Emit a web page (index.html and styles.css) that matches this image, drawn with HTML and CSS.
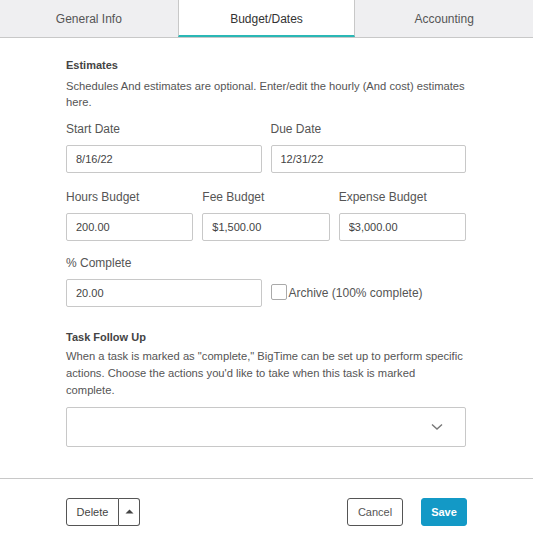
FILE: index.html
```html
<!DOCTYPE html>
<html lang="en">
<head>
    <meta charset="UTF-8">
    <title>Task - Budget/Dates</title>
    <meta name="viewport" content="width=device-width, initial-scale=1.0">
    <link rel="stylesheet" href="styles.css">
</head>
<body>
    <div class="tabs">
        <div class="tab">General Info</div>
        <div class="tab active">Budget/Dates</div>
        <div class="tab">Accounting</div>
    </div>

    <div class="content">
        <h2 class="section-title">Estimates</h2>
        <p class="help help-first">Schedules And estimates are optional. Enter/edit the hourly (And cost) estimates here.</p>

        <div class="row cols-2">
            <div class="field">
                <label>Start Date</label>
                <input type="text" value="8/16/22">
            </div>
            <div class="field">
                <label>Due Date</label>
                <input type="text" value="12/31/22">
            </div>
        </div>

        <div class="row cols-3">
            <div class="field">
                <label>Hours Budget</label>
                <input type="text" value="200.00">
            </div>
            <div class="field">
                <label>Fee Budget</label>
                <input type="text" value="$1,500.00">
            </div>
            <div class="field">
                <label>Expense Budget</label>
                <input type="text" value="$3,000.00">
            </div>
        </div>

        <div class="row cols-2 row-complete">
            <div class="field">
                <label>% Complete</label>
                <input type="text" value="20.00">
            </div>
            <div class="archive">
                <span class="checkbox"></span>
                <span>Archive (100% complete)</span>
            </div>
        </div>

        <h2 class="section-title follow">Task Follow Up</h2>
        <p class="help help-second">When a task is marked as "complete," BigTime can be set up to perform specific actions. Choose the actions you'd like to take when this task is marked complete.</p>

        <div class="select">
            <svg width="12" height="8" viewBox="0 0 12 8"><path d="M1 1.5 L6 6 L11 1.5" fill="none" stroke="#777" stroke-width="1.4"/></svg>
        </div>
    </div>

    <div class="footer">
        <div class="split">
            <button class="btn btn-delete">Delete</button>
            <button class="btn btn-caret"><svg width="9" height="5" viewBox="0 0 9 5"><path d="M0.5 4.5 L4.5 0.5 L8.5 4.5 Z" fill="#444"/></svg></button>
        </div>
        <div class="actions">
            <button class="btn btn-cancel">Cancel</button>
            <button class="btn btn-save">Save</button>
        </div>
    </div>
</body>
</html>
```

FILE: styles.css
```css
:root {
    --text-color: #555;
    --border-color: #c8c8c8;
    --tab-bg: #efeff1;
    --accent: #2ab7b5;
    --save-color: #1399c6;
}

body {
    font-family: 'Liberation Sans', Arial, sans-serif;
    color: var(--text-color);
    background-color: white;
    margin: 0;
}

.tabs {
    display: grid;
    grid-template-columns: 1fr 1fr 1fr;
    height: 38px;
    background-color: var(--tab-bg);
    border-bottom: 1px solid var(--border-color);
    box-sizing: border-box;
}

.tab {
    display: flex;
    align-items: center;
    justify-content: center;
    font-size: 12px;
    color: #555;
}

.tab.active {
    background-color: white;
    color: #333;
    border-left: 1px solid var(--border-color);
    border-right: 1px solid var(--border-color);
    border-bottom: 2px solid var(--accent);
    padding-top: 2px;
}

.content {
    width: 400px;
    margin: 0 0 0 66px;
    padding-top: 19px;
}

.section-title {
    font-size: 11px;
    font-weight: bold;
    line-height: 16px;
    margin: 0;
    color: #444;
}

.section-title.follow {
    margin-top: 22px;
}

.help {
    font-size: 11.2px;
    margin: 5px 0 0;
    color: #555;
}

.help-first {
    line-height: 16px;
}

.help-second {
    line-height: 17px;
    margin-top: 3px;
}

.row {
    display: grid;
    gap: 9px;
    margin-top: 10px;
}

.row + .row {
    margin-top: 15px;
}

.row + .row-complete {
    margin-top: 13px;
}

.cols-2 {
    grid-template-columns: 1fr 1fr;
}

.cols-3 {
    grid-template-columns: 1fr 1fr 1fr;
}

.field label {
    display: block;
    font-size: 12px;
    line-height: 18px;
    margin-bottom: 7px;
    color: #555;
}

.field input {
    width: 100%;
    height: 28px;
    box-sizing: border-box;
    border: 1px solid var(--border-color);
    border-radius: 2px;
    padding: 0 9px;
    font-family: inherit;
    font-size: 11px;
    color: #444;
    outline: none;
}

.archive {
    display: flex;
    align-items: center;
    align-self: end;
    height: 28px;
    font-size: 12px;
    color: #555;
}

.checkbox {
    width: 14px;
    height: 14px;
    border: 1px solid #aaa;
    border-radius: 2px;
    margin-right: 2px;
    margin-top: -2px;
}

.select {
    height: 40px;
    margin-top: 8px;
    border: 1px solid var(--border-color);
    border-radius: 2px;
    box-sizing: border-box;
    display: flex;
    align-items: center;
    justify-content: flex-end;
    padding-right: 22px;
}

.footer {
    margin-top: 31px;
    border-top: 1px solid var(--border-color);
    padding: 19px 66px 0;
    display: flex;
    justify-content: space-between;
}

.split,
.actions {
    display: flex;
}

.actions {
    gap: 18px;
}

.btn {
    height: 28px;
    box-sizing: border-box;
    font-family: inherit;
    font-size: 11px;
    color: #444;
    background-color: white;
    border: 1px solid #555;
    border-radius: 3px;
    cursor: pointer;
    padding: 0;
}

.btn-delete {
    width: 53px;
    border-radius: 3px 0 0 3px;
}

.btn-caret {
    width: 21px;
    border-left: none;
    border-radius: 0 3px 3px 0;
    display: flex;
    align-items: center;
    justify-content: center;
    padding-bottom: 2px;
}

.btn-cancel {
    width: 56px;
    color: #555;
}

.btn-save {
    width: 46px;
    background-color: var(--save-color);
    border-color: var(--save-color);
    color: white;
    font-weight: bold;
}
```
